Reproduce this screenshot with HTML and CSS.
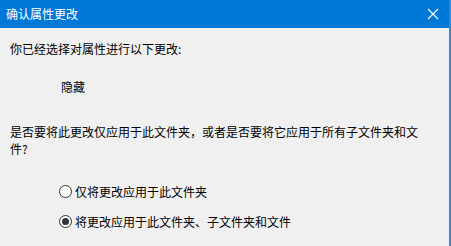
FILE: index.html
```html
<!DOCTYPE html>
<html lang="zh-CN">
<head>
    <meta charset="UTF-8">
    <title>确认属性更改</title>
    <link rel="stylesheet" href="styles.css">
</head>
<body>
    <div class="dialog">
        <div class="titlebar">
            <span class="title">确认属性更改</span>
            <button class="close-btn" aria-label="关闭">
                <svg width="12" height="12" viewBox="0 0 12 12">
                    <path d="M1 1 L11 11 M11 1 L1 11" stroke="#fff" stroke-width="1.1" fill="none"/>
                </svg>
            </button>
        </div>

        <div class="content">
            <p class="intro">你已经选择对属性进行以下更改:</p>
            <p class="change">隐藏</p>
            <p class="question">是否要将此更改仅应用于此文件夹，或者是否要将它应用于所有子文件夹和文件?</p>

            <div class="options">
                <label class="option">
                    <input type="radio" name="scope">
                    <span class="radio"></span>
                    <span>仅将更改应用于此文件夹</span>
                </label>
                <label class="option">
                    <input type="radio" name="scope" checked>
                    <span class="radio"></span>
                    <span>将更改应用于此文件夹、子文件夹和文件</span>
                </label>
            </div>
        </div>
    </div>
</body>
</html>
```

FILE: styles.css
```css
body {
    margin: 0;
    font-family: "Noto Sans CJK SC", "Noto Sans", sans-serif;
    font-size: 12px;
    color: #000;
    background-color: #f0f0f0;
}

.dialog {
    width: 451px;
    height: 246px;
    box-sizing: border-box;
    background-color: #f0f0f0;
    border-right: 2px solid #3d84c8;
    overflow: hidden;
}

.titlebar {
    height: 28px;
    display: flex;
    align-items: center;
    justify-content: space-between;
    background-color: #0078d7;
    color: #fff;
    padding-left: 6px;
}

.title {
    line-height: 17px;
    margin-top: -2px;
}

.close-btn {
    width: 32px;
    height: 28px;
    border: none;
    background: transparent;
    padding: 0;
    display: flex;
    align-items: center;
    justify-content: center;
}

.content {
    padding: 0 24px 0 10px;
    line-height: 17px;
}

.content p {
    margin: 0;
}

.intro {
    padding-top: 12px;
}

.change {
    margin-top: 21px !important;
    padding-left: 51px;
}

.question {
    margin-top: 28px !important;
}

.options {
    margin-top: 26px;
    padding-left: 49px;
    display: flex;
    flex-direction: column;
    gap: 13px;
}

.option {
    display: flex;
    align-items: center;
    gap: 3px;
    height: 17px;
}

.option input {
    display: none;
}

.radio {
    width: 11px;
    height: 11px;
    border: 1px solid #333;
    border-radius: 50%;
    background-color: #fff;
    display: flex;
    align-items: center;
    justify-content: center;
}

.option input:checked + .radio::after {
    content: "";
    width: 7px;
    height: 7px;
    border-radius: 50%;
    background-color: #333;
}
```
